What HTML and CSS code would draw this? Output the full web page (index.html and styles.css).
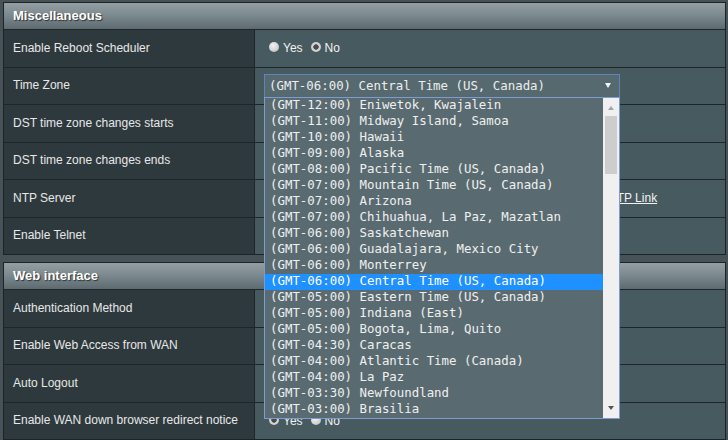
FILE: index.html
```html
<!DOCTYPE html>
<html lang="en">
<head>
<meta charset="utf-8">
<title>Miscellaneous</title>
<link rel="stylesheet" href="styles.css">
</head>
<body>
<div class="page">
  <section class="panel">
    <div class="panel-head">Miscellaneous</div>
    <div class="row">
      <div class="label">Enable Reboot Scheduler</div>
      <div class="value">
        <label class="opt"><input type="radio" name="reboot"><span>Yes</span></label>
        <label class="opt"><input type="radio" name="reboot" checked><span>No</span></label>
      </div>
    </div>
    <div class="row">
      <div class="label">Time Zone</div>
      <div class="value">
        <div class="select-wrap">
          <div class="select">
            <span class="select-text">(GMT-06:00) Central Time (US, Canada)</span>
            <span class="caret"></span>
          </div>
          <div class="dropdown">
            <ul class="options">
              <li>(GMT-12:00) Eniwetok, Kwajalein</li>
              <li>(GMT-11:00) Midway Island, Samoa</li>
              <li>(GMT-10:00) Hawaii</li>
              <li>(GMT-09:00) Alaska</li>
              <li>(GMT-08:00) Pacific Time (US, Canada)</li>
              <li>(GMT-07:00) Mountain Time (US, Canada)</li>
              <li>(GMT-07:00) Arizona</li>
              <li>(GMT-07:00) Chihuahua, La Paz, Mazatlan</li>
              <li>(GMT-06:00) Saskatchewan</li>
              <li>(GMT-06:00) Guadalajara, Mexico City</li>
              <li>(GMT-06:00) Monterrey</li>
              <li class="selected">(GMT-06:00) Central Time (US, Canada)</li>
              <li>(GMT-05:00) Eastern Time (US, Canada)</li>
              <li>(GMT-05:00) Indiana (East)</li>
              <li>(GMT-05:00) Bogota, Lima, Quito</li>
              <li>(GMT-04:30) Caracas</li>
              <li>(GMT-04:00) Atlantic Time (Canada)</li>
              <li>(GMT-04:00) La Paz</li>
              <li>(GMT-03:30) Newfoundland</li>
              <li>(GMT-03:00) Brasilia</li>
            </ul>
            <div class="scrollbar">
              <span class="arrow-up"></span>
              <span class="thumb"></span>
              <span class="arrow-down"></span>
            </div>
          </div>
        </div>
      </div>
    </div>
    <div class="row">
      <div class="label">DST time zone changes starts</div>
      <div class="value"></div>
    </div>
    <div class="row">
      <div class="label">DST time zone changes ends</div>
      <div class="value"></div>
    </div>
    <div class="row">
      <div class="label">NTP Server</div>
      <div class="value">
        <span class="ntp-input"></span>
        <a class="link" href="#">NTP Link</a>
      </div>
    </div>
    <div class="row">
      <div class="label">Enable Telnet</div>
      <div class="value"></div>
    </div>
  </section>

  <section class="panel">
    <div class="panel-head">Web interface</div>
    <div class="row">
      <div class="label">Authentication Method</div>
      <div class="value"></div>
    </div>
    <div class="row">
      <div class="label">Enable Web Access from WAN</div>
      <div class="value"></div>
    </div>
    <div class="row">
      <div class="label">Auto Logout</div>
      <div class="value"></div>
    </div>
    <div class="row">
      <div class="label">Enable WAN down browser redirect notice</div>
      <div class="value">
        <label class="opt"><input type="radio" name="wandown" checked><span>Yes</span></label>
        <label class="opt"><input type="radio" name="wandown"><span>No</span></label>
      </div>
    </div>
  </section>
</div>
</body>
</html>
```

FILE: styles.css
```css
html, body {
  margin: 0;
  padding: 0;
}

body {
  background: #465256;
  font-family: "Liberation Sans", Arial, sans-serif;
  font-size: 12px;
  color: #e6e6e6;
  width: 728px;
  height: 440px;
  overflow: hidden;
}

.page {
  padding: 2px 2px 0 3px;
}

.panel {
  border: 1px solid #1d2427;
  background: #475a60;
}

.panel + .panel {
  margin-top: 7px;
}

.panel-head {
  height: 26px;
  line-height: 26px;
  padding-left: 9px;
  font-size: 13px;
  font-weight: bold;
  color: #ffffff;
  text-shadow: 1px 1px 1px #2a3336;
  background: linear-gradient(to bottom, #939fa3 0%, #7d8a8f 45%, #5d6b70 100%);
}

.row {
  display: grid;
  grid-template-columns: 251px 1fr;
  border-top: 1px solid #1f2629;
  height: 36.5px;
}

.label {
  background: #2e393d;
  border-right: 1px solid #1f2629;
  padding-left: 9px;
  padding-bottom: 1px;
  display: flex;
  align-items: center;
  color: #e8e8e8;
}

.value {
  display: flex;
  align-items: center;
  padding-left: 9px;
  background: #475a60;
}

.opt {
  display: inline-flex;
  align-items: center;
  color: #f2f2f2;
  margin-left: 5px;
  margin-right: 3px;
}

.opt input {
  appearance: none;
  -webkit-appearance: none;
  width: 10px;
  height: 10px;
  margin: 0 4px 0 0;
  border-radius: 50%;
  background: radial-gradient(circle at 40% 35%, #f2f2f2 0%, #d4d4d4 55%, #b0b0b0 100%);
  position: relative;
  top: -1px;
}

.opt input:checked {
  background: radial-gradient(circle, #4a4a4a 0, #4a4a4a 2.4px, #d6d6d6 3px, #c4c4c4 100%);
}

.select-wrap {
  position: relative;
  width: 356px;
}

.select {
  box-sizing: border-box;
  height: 24px;
  border: 1px solid #5f84bd;
  background: #56696f;
  display: flex;
  align-items: center;
  padding-left: 4px;
  font-family: "DejaVu Sans Mono", "Liberation Mono", monospace;
  font-size: 12.4px;
  color: #eeeeee;
}

.select-text {
  flex: 1;
  white-space: nowrap;
}

.caret {
  width: 0;
  height: 0;
  border-left: 3px solid transparent;
  border-right: 3px solid transparent;
  border-top: 5px solid #f4f4f4;
  margin-right: 8px;
}

.dropdown {
  position: absolute;
  top: 23px;
  left: 0;
  z-index: 10;
  box-sizing: border-box;
  width: 356px;
  height: 322px;
  border: 1px solid #7d9dd2;
  background: #596b71;
  display: flex;
}

.options {
  list-style: none;
  margin: 0;
  padding: 0;
  flex: 1;
  font-family: "DejaVu Sans Mono", "Liberation Mono", monospace;
  font-size: 12.4px;
  color: #f0f0f0;
}

.options li {
  height: 16px;
  box-sizing: border-box;
  line-height: 14px;
  padding: 0 0 2px 5px;
  white-space: nowrap;
}

.options li.selected {
  background: #1e90ff;
  color: #ffffff;
}

.scrollbar {
  width: 16px;
  background: #f0f0f0;
  position: relative;
}

.arrow-up {
  position: absolute;
  left: 5px;
  top: 8px;
  width: 0;
  height: 0;
  border-left: 3px solid transparent;
  border-right: 3px solid transparent;
  border-bottom: 4px solid #a3a3a3;
}

.thumb {
  position: absolute;
  left: 2px;
  top: 18px;
  width: 12px;
  height: 58px;
  background: #cdcdcd;
}

.arrow-down {
  position: absolute;
  left: 5px;
  bottom: 8px;
  width: 0;
  height: 0;
  border-left: 3px solid transparent;
  border-right: 3px solid transparent;
  border-top: 4px solid #555555;
}

.ntp-input {
  display: inline-block;
  width: 340px;
  height: 22px;
  margin-right: 4px;
}

.link {
  color: #f2f2f2;
  text-decoration: underline;
}
```
